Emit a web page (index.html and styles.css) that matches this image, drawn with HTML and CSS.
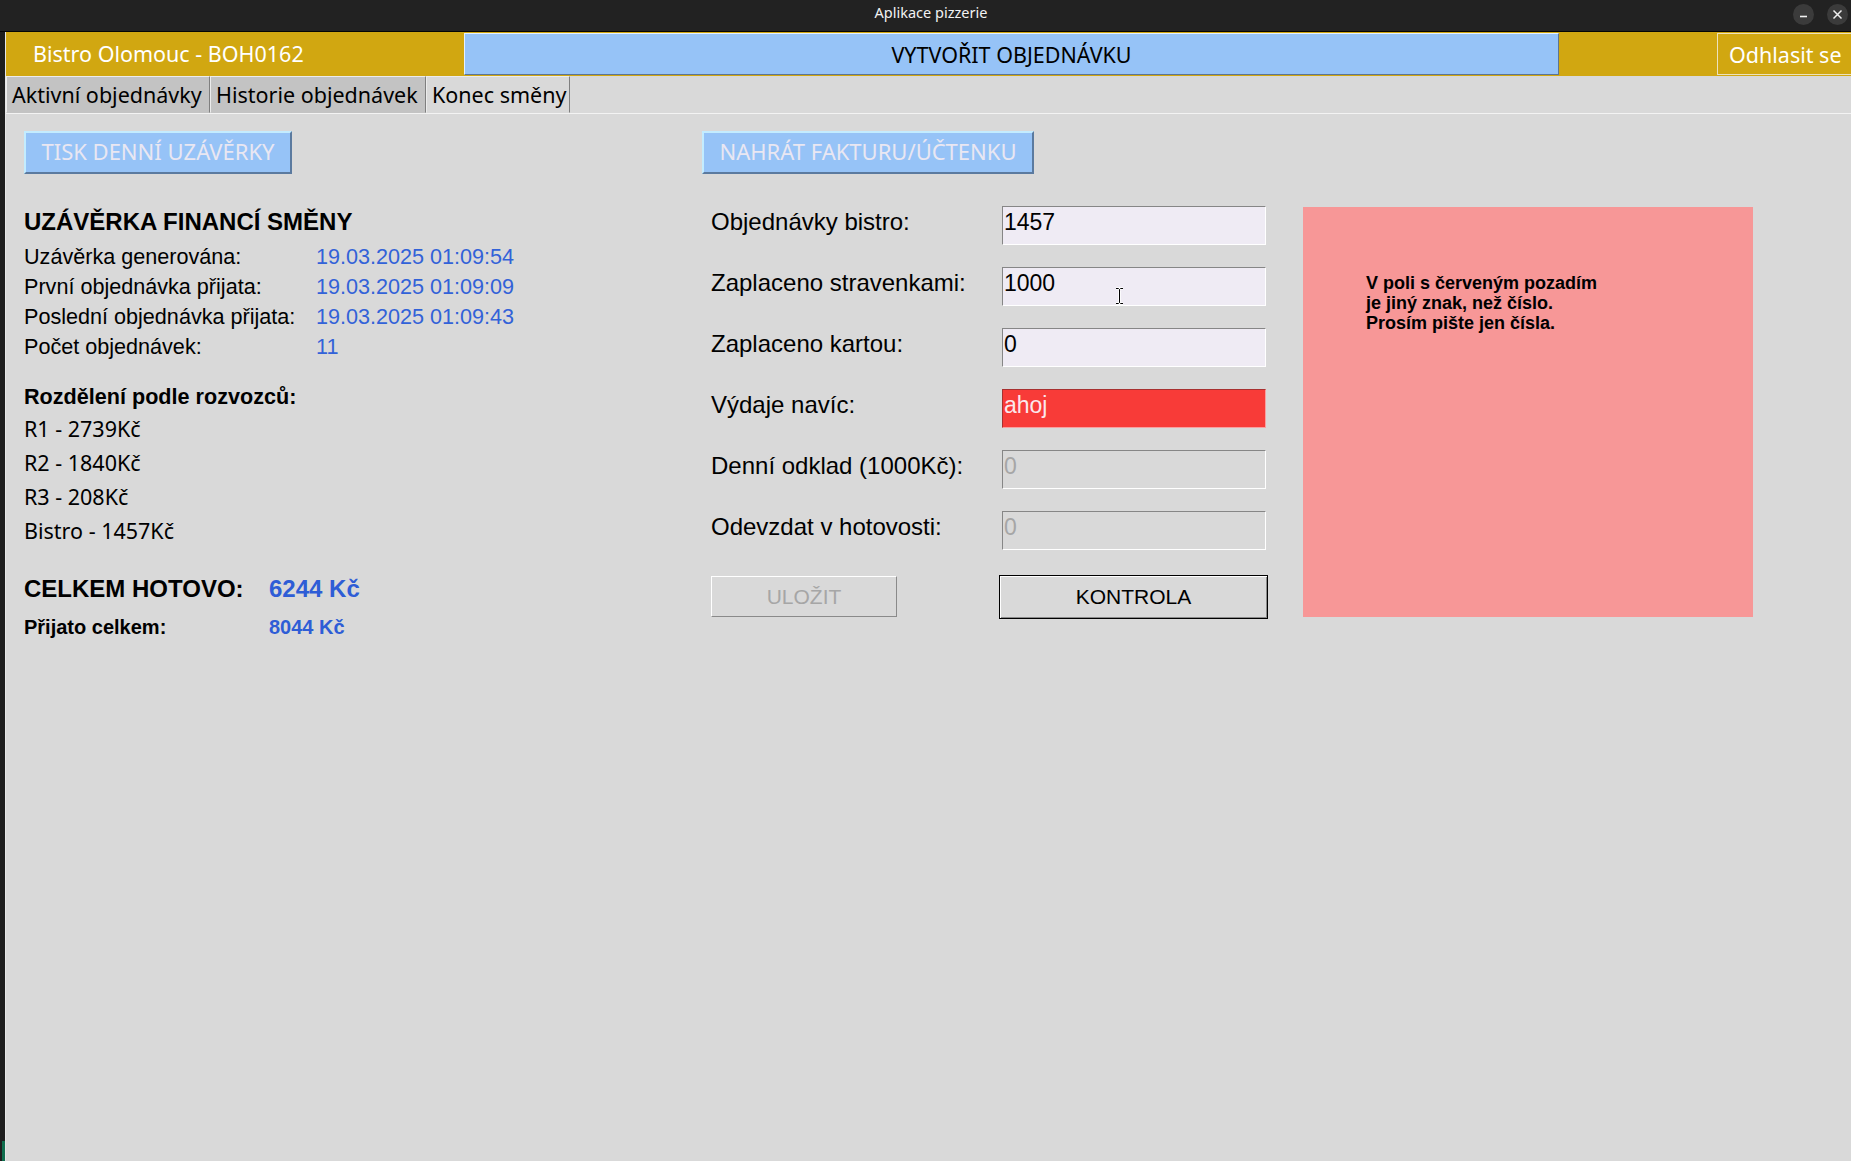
FILE: index.html
```html
<!DOCTYPE html>
<html lang="cs">
<head>
<meta charset="utf-8">
<title>Aplikace pizzerie</title>
<link rel="stylesheet" href="styles.css">
</head>
<body>
<div class="titlebar">
  <span class="title">Aplikace pizzerie</span>
  <div class="wm">
    <span class="wm-btn"><svg width="21" height="21" viewBox="0 0 21 21"><path d="M7 12.5h7" stroke="#f0f0f0" stroke-width="1.6" fill="none"/></svg></span>
    <span class="wm-btn"><svg width="21" height="21" viewBox="0 0 21 21"><path d="M6.5 6.5l8 8M14.5 6.5l-8 8" stroke="#f0f0f0" stroke-width="1.5" fill="none"/></svg></span>
  </div>
</div>
<div class="frame">
  <div class="edge"><span class="edge-mark"></span></div>
  <div class="window">
    <header class="topbar">
      <div class="brand">Bistro Olomouc - BOH0162</div>
      <div class="create">VYTVOŘIT OBJEDNÁVKU</div>
      <div class="spacer"></div>
      <div class="logout">Odhlasit se</div>
    </header>
    <nav class="tabs">
      <div class="tab tab-1">Aktivní objednávky</div>
      <div class="tab tab-2">Historie objednávek</div>
      <div class="tab tab-3 active">Konec směny</div>
    </nav>
    <main class="content">
      <section class="summary">
        <div class="btn-blue btn-print">TISK DENNÍ UZÁVĚRKY</div>
        <div class="sum-title">UZÁVĚRKA FINANCÍ SMĚNY</div>
        <div class="info">
          <span>Uzávěrka generována:</span><span class="val">19.03.2025 01:09:54</span>
          <span>První objednávka přijata:</span><span class="val">19.03.2025 01:09:09</span>
          <span>Poslední objednávka přijata:</span><span class="val">19.03.2025 01:09:43</span>
          <span>Počet objednávek:</span><span class="val">11</span>
        </div>
        <div class="split-title">Rozdělení podle rozvozců:</div>
        <div class="split">
          <div>R1 - 2739Kč</div>
          <div>R2 - 1840Kč</div>
          <div>R3 - 208Kč</div>
          <div>Bistro - 1457Kč</div>
        </div>
        <div class="totals total-main">
          <span>CELKEM HOTOVO:</span><span class="val">6244 Kč</span>
        </div>
        <div class="totals total-sub">
          <span>Přijato celkem:</span><span class="val">8044 Kč</span>
        </div>
      </section>
      <section class="form-col">
        <div class="btn-blue btn-upload">NAHRÁT FAKTURU/ÚČTENKU</div>
        <div class="fields">
          <span class="label">Objednávky bistro:</span>
          <div class="entry">1457</div>
          <span class="label">Zaplaceno stravenkami:</span>
          <div class="entry">1000<svg class="ibeam" width="9" height="18" viewBox="0 0 9 18"><path d="M1 1.5h2.5l1 1 1-1H8M4.5 2.5v13M1 16.5h2.5l1-1 1 1H8" stroke="#fff" stroke-width="2.6" fill="none"/><path d="M1 1.5h2.5l1 1 1-1H8M4.5 2.5v13M1 16.5h2.5l1-1 1 1H8" stroke="#000" stroke-width="1" fill="none"/></svg></div>
          <span class="label">Zaplaceno kartou:</span>
          <div class="entry">0</div>
          <span class="label">Výdaje navíc:</span>
          <div class="entry entry-error">ahoj</div>
          <span class="label">Denní odklad (1000Kč):</span>
          <div class="entry entry-disabled">0</div>
          <span class="label">Odevzdat v hotovosti:</span>
          <div class="entry entry-disabled">0</div>
        </div>
        <div class="actions">
          <div class="btn btn-save">ULOŽIT</div>
          <div class="btn btn-check">KONTROLA</div>
        </div>
      </section>
      <aside class="notice">V poli s červeným pozadím<br>je jiný znak, než číslo.<br>Prosím pište jen čísla.</aside>
    </main>
  </div>
</div>
</body>
</html>
```
FILE: styles.css
```css
* { box-sizing: border-box; }
html, body { margin: 0; padding: 0; }
body {
  width: 1851px;
  height: 1161px;
  overflow: hidden;
  background: #d9d9d9;
  font-family: "Liberation Sans", Arial, sans-serif;
  color: #000;
}

/* window title bar */
.titlebar {
  height: 32px;
  background: #222222;
  border-bottom: 1px solid #050505;
  display: grid;
  grid-template-columns: 1fr auto 1fr;
}
.title {
  grid-column: 2;
  color: #f2f2f2;
  font-family: "Noto Sans", sans-serif;
  font-size: 14.5px;
  line-height: 20px;
  padding-top: 2px;
  padding-left: 11px;
}
.wm {
  grid-column: 3;
  justify-self: end;
  display: flex;
  gap: 13px;
  padding-top: 4px;
  padding-right: 3px;
}
.wm-btn {
  width: 21px;
  height: 21px;
  border-radius: 50%;
  background: #3b3b3b;
  display: block;
}
.wm-btn svg { display: block; }

/* frame */
.frame { display: flex; height: 1129px; }
.edge {
  width: 6px;
  flex-shrink: 0;
  background: #1e1e1e;
  border-right: 1px solid #e6e6e6;
  display: flex;
  flex-direction: column;
  justify-content: flex-end;
}
.edge-mark { display: block; height: 20px; width: 3px; margin-left: 2px; background: #0f6d4d; }
.window { flex: 1; min-width: 0; overflow: hidden; display: flex; flex-direction: column; }

/* top yellow bar */
.topbar {
  height: 44px;
  flex-shrink: 0;
  background: #d1a711;
  display: flex;
  align-items: center;
  font-family: "Noto Sans", sans-serif;
  font-size: 21.5px;
  white-space: nowrap;
}
.brand { width: 456px; flex-shrink: 0; padding-left: 27px; color: #fff; line-height: 30px; }
.create {
  margin-left: 2px;
  width: 1095px;
  flex-shrink: 0;
  height: 42px;
  background: #96c3f7;
  border: 1px solid;
  border-color: #e4f1ff #5c7594 #5c7594 #e4f1ff;
  display: flex;
  align-items: center;
  justify-content: center;
  color: #000;
}
.spacer { flex: 1; }
.logout {
  flex-shrink: 0;
  width: 134px;
  height: 42px;
  border: 1px solid #ece2bd;
  border-right: none;
  color: #fff;
  padding-left: 11px;
  display: flex;
  align-items: center;
}

/* tabs */
.tabs {
  height: 38px;
  flex-shrink: 0;
  display: flex;
  border-bottom: 1px solid #f3f3f3;
  font-family: "Noto Sans", sans-serif;
  font-size: 21.5px;
}
.tab {
  height: 37px;
  line-height: 35px;
  padding-left: 5px;
  background: #c3c3c3;
  border: 1px solid;
  border-color: #ececec #7f7f7f transparent #ececec;
  white-space: nowrap;
  overflow: hidden;
}
.tab-1 { width: 204px; }
.tab-2 { width: 216px; }
.tab-3 { width: 144px; }
.tab.active { background: #d9d9d9; }

/* content */
.content { flex: 1; display: flex; padding: 17px 0 0 18px; }
.summary { width: 678px; flex-shrink: 0; }

.btn-blue {
  height: 43px;
  background: #96c3f7;
  border: 2px solid;
  border-color: #c3ecff #5b7a9f #5b7a9f #c3ecff;
  font-family: "Noto Sans", sans-serif;
  font-size: 22px;
  color: #e9e7f2;
  line-height: 36px;
  padding-bottom: 3px;
  text-align: center;
  white-space: nowrap;
}
.btn-print { width: 268px; }
.btn-upload { width: 332px; }

.sum-title { margin-top: 35px; font-weight: bold; font-size: 24px; line-height: 26px; }
.info {
  margin-top: 7px;
  display: grid;
  grid-template-columns: 292px auto;
  font-size: 21.6px;
  line-height: 30px;
}
.val { color: #3262d8; }
.split-title { margin-top: 19px; font-weight: bold; font-size: 21.6px; line-height: 31px; }
.split { font-family: "Noto Sans", sans-serif; font-size: 21.5px; line-height: 34px; }

.totals { display: grid; grid-template-columns: 245px auto; font-weight: bold; }
.total-main { margin-top: 26px; font-size: 24px; line-height: 30px; }
.total-sub { margin-top: 9px; font-size: 20px; line-height: 28px; }
.totals .val { color: #2e5dd6; }

/* form */
.form-col { width: 601px; flex-shrink: 0; }
.fields {
  margin: 32px 0 0 9px;
  display: grid;
  grid-template-columns: 291px 264px;
  row-gap: 22px;
  align-items: start;
}
.label { font-size: 24px; line-height: 32px; white-space: nowrap; }
.entry {
  position: relative;
  height: 39px;
  background: #efebf4;
  border: 1px solid;
  border-color: #868686 #ffffff #ffffff #868686;
  font-size: 23px;
  line-height: 31px;
  padding: 0 0 0 1px;
  color: #000;
}
.entry-error { background: #f83b38; border-color: #a83030 #f8a0a0 #f8a0a0 #a83030; color: #fbe8ec; }
.entry-disabled { background: #d9d9d9; color: #a6a6a6; }
.ibeam { position: absolute; left: 112px; top: 19px; }

.actions {
  margin: 26px 0 0 9px;
  display: grid;
  grid-template-columns: 291px 264px;
  align-items: start;
}
.btn {
  display: flex;
  align-items: center;
  justify-content: center;
  font-size: 21px;
  background: #d9d9d9;
}
.btn-save {
  width: 186px;
  height: 41px;
  border: 1px solid;
  border-color: #ffffff #8a8a8a #8a8a8a #ffffff;
  color: #a6a6a6;
}
.btn-check {
  width: 269px;
  height: 44px;
  margin: -1px 0 0 -3px;
  border: 1px solid #000;
  box-shadow: inset 1px 1px 0 #ffffff, inset -1px -1px 0 #8a8a8a;
  color: #000;
}

/* notice */
.notice {
  margin-top: 76px;
  width: 450px;
  height: 410px;
  flex-shrink: 0;
  background: #f79797;
  padding: 66px 0 0 63px;
  font-weight: bold;
  font-size: 18px;
  line-height: 20px;
}
```
